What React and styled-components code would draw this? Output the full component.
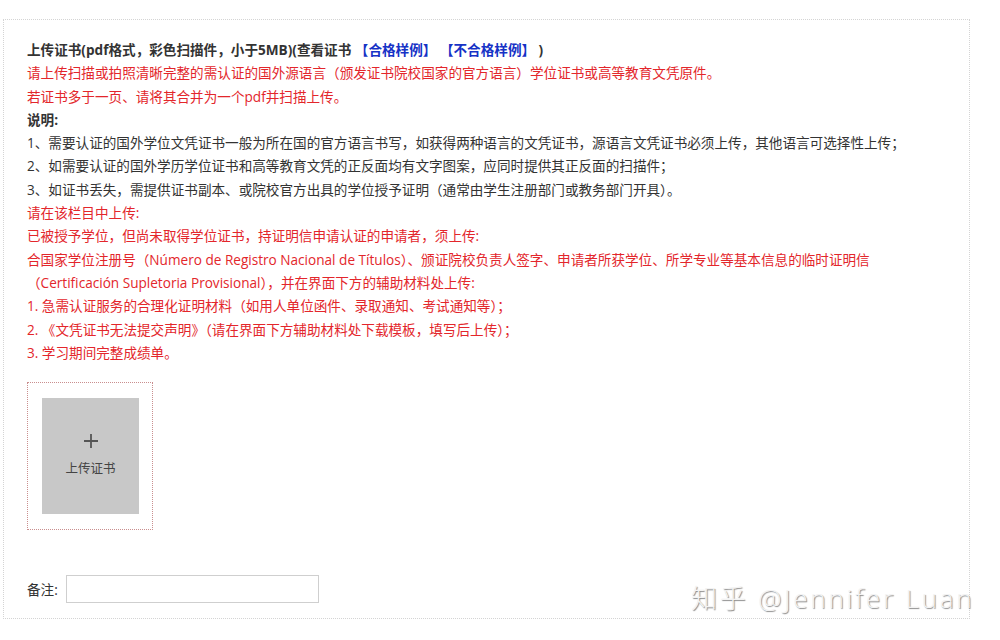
import React from "react";
import styled, { createGlobalStyle } from "styled-components";

const Global = createGlobalStyle`
  html, body { margin: 0; padding: 0; background: #fff; }
  body {
    width: 1000px;
    height: 640px;
    overflow: hidden;
    font-family: "Open Sans", "Noto Sans CJK SC", sans-serif;
    position: relative;
  }
`;

const Page = styled.div`
  padding: 19px 0 0 3px;
  position: relative;
  height: 621px;
  box-sizing: border-box;
`;

const Panel = styled.section`
  width: 967px;
  height: 600px;
  box-sizing: border-box;
  border: 1px dotted #d4d4d4;
  padding: 18px 0 0 23px;
  display: flex;
  flex-direction: column;
`;

const Notes = styled.div`
  display: flex;
  flex-direction: column;
  font-size: 13.6px;
  line-height: 23.3px;
`;

const Line = styled.div`
  white-space: nowrap;
  color: ${(p) => (p.$tone === "red" ? "#e3262b" : "#333")};
  font-weight: ${(p) => (p.$bold ? 700 : 400)};
`;

const Link = styled.span`
  color: #1632c6;
  font-weight: 700;
`;

const UploadFrame = styled.div`
  margin-top: 18px;
  width: 126px;
  height: 148px;
  box-sizing: border-box;
  border: 1px dotted #c98e8e;
  padding: 15px 13px 15px 14px;
  display: flex;
`;

const UploadTile = styled.button`
  flex: 1;
  border: none;
  background: #c8c8c8;
  display: flex;
  flex-direction: column;
  align-items: center;
  justify-content: center;
  gap: 10px;
  padding: 0 0 2px 0;
  cursor: pointer;
  font-family: inherit;
`;

const Plus = styled.svg`
  width: 16px;
  height: 16px;
  display: block;
`;

const TileLabel = styled.span`
  font-size: 12.5px;
  color: #444;
  line-height: 18px;
  font-family: "Noto Sans CJK SC", sans-serif;
`;

const RemarkRow = styled.div`
  margin-top: 45px;
  display: flex;
  align-items: center;
  gap: 8px;
`;

const RemarkLabel = styled.label`
  font-size: 13.6px;
  color: #333;
`;

const RemarkInput = styled.input`
  width: 253px;
  height: 28px;
  box-sizing: border-box;
  border: 1px solid #cfcfcf;
  outline: none;
  padding: 0 6px;
  font-family: inherit;
`;

const Watermark = styled.div`
  position: absolute;
  left: 691px;
  top: 579px;
  font-family: "Open Sans", "Noto Sans CJK SC", sans-serif;
  font-weight: 300;
  font-size: 26px;
  line-height: 38px;
  color: #f3f3f3;
  letter-spacing: 2.8px;
  text-shadow: 1px 1px 1px #8a8a8a, -0.5px -0.5px 0 #fff;
  white-space: nowrap;
  pointer-events: none;
`;

export default function App() {
  return (
    <>
      <Global />
      <Page>
        <Panel>
          <Notes>
            <Line $bold>
              上传证书(pdf格式，彩色扫描件，小于5MB)(查看证书 <Link>【合格样例】 【不合格样例】</Link> )
            </Line>
            <Line $tone="red">
              请上传扫描或拍照清晰完整的需认证的国外源语言（颁发证书院校国家的官方语言）学位证书或高等教育文凭原件。
            </Line>
            <Line $tone="red">若证书多于一页、请将其合并为一个pdf并扫描上传。</Line>
            <Line $bold>说明:</Line>
            <Line>
              1、需要认证的国外学位文凭证书一般为所在国的官方语言书写，如获得两种语言的文凭证书，源语言文凭证书必须上传，其他语言可选择性上传；
            </Line>
            <Line>
              2、如需要认证的国外学历学位证书和高等教育文凭的正反面均有文字图案，应同时提供其正反面的扫描件；
            </Line>
            <Line>
              3、如证书丢失，需提供证书副本、或院校官方出具的学位授予证明（通常由学生注册部门或教务部门开具）。
            </Line>
            <Line $tone="red">请在该栏目中上传:</Line>
            <Line $tone="red">
              已被授予学位，但尚未取得学位证书，持证明信申请认证的申请者，须上传:
            </Line>
            <Line $tone="red">
              合国家学位注册号（Número de Registro Nacional de Títulos）、颁证院校负责人签字、申请者所获学位、所学专业等基本信息的临时证明信
            </Line>
            <Line $tone="red">
              （Certificación Supletoria Provisional），并在界面下方的辅助材料处上传:
            </Line>
            <Line $tone="red">
              1. 急需认证服务的合理化证明材料（如用人单位函件、录取通知、考试通知等）；
            </Line>
            <Line $tone="red">
              2. 《文凭证书无法提交声明》（请在界面下方辅助材料处下载模板，填写后上传）；
            </Line>
            <Line $tone="red">3. 学习期间完整成绩单。</Line>
          </Notes>

          <UploadFrame>
            <UploadTile type="button">
              <Plus viewBox="0 0 16 16">
                <path d="M8 1v14M1 8h14" stroke="#555" strokeWidth="1.8" fill="none" />
              </Plus>
              <TileLabel>上传证书</TileLabel>
            </UploadTile>
          </UploadFrame>

          <RemarkRow>
            <RemarkLabel htmlFor="remark">备注:</RemarkLabel>
            <RemarkInput id="remark" type="text" />
          </RemarkRow>
        </Panel>
        <Watermark>知乎 @Jennifer Luan</Watermark>
      </Page>
    </>
  );
}
